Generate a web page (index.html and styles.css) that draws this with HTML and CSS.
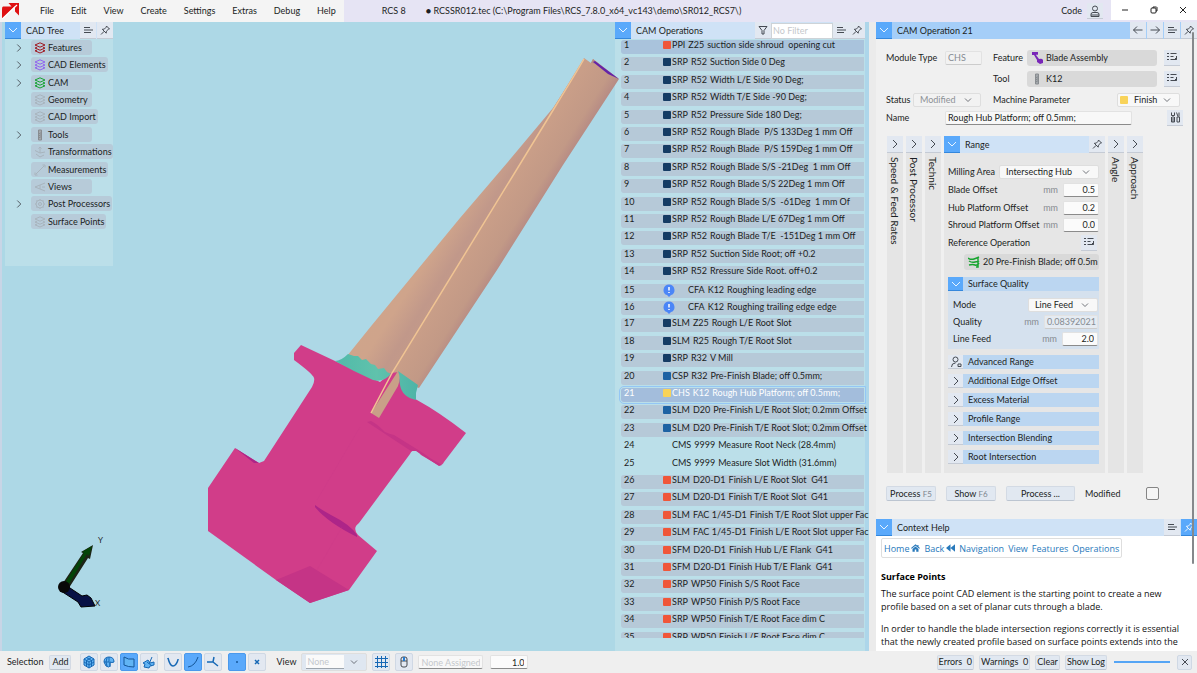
FILE: index.html
```html
<!DOCTYPE html>
<html lang="en">
<head>
<meta charset="utf-8">
<title>RCS 8 - RCSSR012.tec</title>
<link rel="stylesheet" href="styles.css">
</head>
<body>
<svg class="defs" aria-hidden="true">
  <symbol id="down" viewBox="0 0 16 16"><path d="M4 6l4 4 4-4"/></symbol>
  <symbol id="right" viewBox="0 0 16 16"><path d="M6 4l4 4-4 4"/></symbol>
  <symbol id="lines" viewBox="0 0 16 16"><path d="M4 5.500h6M4 8h9M4 10.500h7"/></symbol>
  <symbol id="pin" viewBox="0 0 16 16"><path d="M9.500 4l3 3-1.200.3-1.900 1.900-.2 2-3.900-3.900 2-.2 1.900-1.900zM7.200 9.300L4 12.500"/></symbol>
  <symbol id="arrow-left" viewBox="0 0 16 16"><path d="M12.500 8h-9M7 4.500L3.500 8 7 11.500"/></symbol>
  <symbol id="arrow-right" viewBox="0 0 16 16"><path d="M3.500 8h9M9 4.500L12.500 8 9 11.500"/></symbol>
  <symbol id="funnel" viewBox="0 0 16 16"><path d="M4 4.500h8L9 8.500V12H7V8.500z"/></symbol>
  <symbol id="close" viewBox="0 0 16 16"><path d="M5 5l6 6M11 5l-6 6"/></symbol>
  <symbol id="picklist" viewBox="0 0 16 16"><path d="M3 4.500h2M3 7.500h2M3 10.500h2M6.500 4.500h6M6.500 7.500h3M6.500 10.500h6M12.500 7v3.500M11 9l1.500 1.500"/></symbol>
  <symbol id="layers" viewBox="0 0 12 12"><path d="M6 .8l5 2.200-5 2.200L1 3zM1 6l5 2.200L11 6M1 8.800L6 11l5-2.200M3 5.500L1 6M9 5.500l2 .5M3 8.200l-2 .6M9 8.200l2 .6"/></symbol>
  <symbol id="bit" viewBox="0 0 12 12"><path class="fill" d="M4.500 1h3v10h-3z"/><path d="M4.500 5l3-1.500M4.500 7l3-1.500M4.500 9l3-1.500"/></symbol>
  <symbol id="transform" viewBox="0 0 12 12"><path d="M6 7V1M4.500 2.500L6 1l1.500 1.500M6 7L1 4.500M6 7l5-1M2 8l4 3 4-2"/></symbol>
  <symbol id="measure" viewBox="0 0 12 12"><path d="M2 10l8-8M1 8.500V11h2.500M8.500 1H11v2.500"/></symbol>
  <symbol id="views" viewBox="0 0 12 12"><path d="M11 2L1 6l10 4M6 4v4M8 6h3"/></symbol>
  <symbol id="gear" viewBox="0 0 12 12"><circle cx="6" cy="6" r="4"/><circle cx="6" cy="6" r="1.500"/><path d="M6 1v1M6 10v1M1 6h1M10 6h1M2.500 2.500l.7.7M9.500 9.500l-.7-.7M9.500 2.500l-.7.7M2.500 9.500l.7-.7"/></symbol>
  <symbol id="notice" viewBox="0 0 12 13"><path class="solid" d="M6 .5a5.500 5.500 0 0 1 2 10.600L6 13l-2-1.900A5.500 5.500 0 0 1 6 .5z"/><path class="mark" d="M6 3v3.500M6 8v1"/></symbol>
  <symbol id="person" viewBox="0 0 16 16"><circle cx="8" cy="5.500" r="2.500"/><path d="M4 13.500v-2.200Q4 9.500 6 9.500h4q2 0 2 1.800v2.200zM4 12h8"/></symbol>
</svg>

<header class="titlebar">
  <nav class="menu" aria-label="Main menu">
    <svg class="logo" viewBox="0 0 18 17"><path fill="#df1112" d="M1 3.500h11.500L0 16V6q0-2.500 1-2.500zM6.500 0H17v12.500L13 8.500v-5H9.500z"/><path stroke="#fff" stroke-width="1.200" d="M0 16L15 2"/></svg>
    <button>File</button><button>Edit</button><button>View</button><button>Create</button><button>Settings</button><button>Extras</button><button>Debug</button><button>Help</button>
  </nav>
  <div class="caption"><span>RCS 8</span><span>● RCSSR012.tec (C:\Program Files\RCS_7.8.0_x64_vc143\demo\SR012_RCS7\)</span></div>
  <span class="code">Code</span>
  <button class="tool user" aria-label="User"><svg class="ic"><use href="#person"/></svg></button>
  <div class="window-buttons">
    <button aria-label="Minimize"><svg viewBox="0 0 16 16"><path d="M5 8h6"/></svg></button>
    <button aria-label="Restore"><svg viewBox="0 0 16 16"><rect x="5" y="6" width="5" height="5" rx="1"/><path d="M7 6V5h3.500l.5.500V9h-1"/></svg></button>
    <button aria-label="Close"><svg viewBox="0 0 16 16"><path d="M5 5l6 6M11 5l-6 6"/></svg></button>
  </div>
</header>

<main class="workspace">
  <section class="viewport" aria-label="3D view">
    <svg class="scene" viewBox="0 22 615 629">
      <defs>
        <linearGradient id="skin" gradientUnits="userSpaceOnUse" x1="360" y1="290" x2="445" y2="345"><stop offset="0" stop-color="#b98f83"/><stop offset=".12" stop-color="#cfa58b"/><stop offset=".4" stop-color="#cfa48b"/><stop offset=".62" stop-color="#c1988a"/><stop offset="1" stop-color="#c69c88"/></linearGradient>
        <linearGradient id="face" gradientUnits="userSpaceOnUse" x1="485" y1="225" x2="520" y2="247"><stop offset="0" stop-color="#c99e88"/><stop offset=".6" stop-color="#c29986"/><stop offset="1" stop-color="#b08484"/></linearGradient>
        <linearGradient id="fillet"><stop offset="0" stop-color="#50baa9"/><stop offset=".5" stop-color="#60c2ac"/><stop offset="1" stop-color="#4db4a7"/></linearGradient>
      </defs>
      <path fill="url(#skin)" d="M347 356L372 325 460 218 507 163 553 108 584 60V100L396 380z"/>
      <path fill="url(#face)" d="M584 58l7 5 2-4 26 20-56 86-66 105-78 118-29-10 164-271z"/>
      <path fill="#b58c84" d="M591 63l2-4 6 5z"/><path fill="#6423a8" d="M595 61l24 18-11-5-15-12z"/>
      <path fill="#d13d89" d="M301 345l34 16q34 16 45 21l11-9 8-1 5 20 13 8q22 12 49 33l-22 29q-2 4-6 3l-17-10q-7-9-11-1L359 523q-7 5-1 12l19 16-28 39-39 13-34-23-68-49v-43l27-40 24 15 5-2 48-74q3-6 2-9-1-4-20-18v-7z"/>
      <path fill="#c53486" d="M276 580l34-14 39 24-39 13zM367 422l4-1q5 2 14 11 4 2 9 3l21 13q7 4 15 10l12 7-3 1-23-15-5 0z"/>
      <path fill="#ad2588" d="M315 505q5 4 16 10 20 10 26 20v2q-30-15-42-30zM235 448l24 15-5 0z"/>
      <path fill="none" stroke="#c93787" d="M360 427l-43 73M342 527l-25 43" opacity=".25"/>
      <path fill="url(#fillet)" d="M335 361q6 0 13-7l6 2 4 0 4 4 4-1 5 5 4 1 3 4 6-1 3 4 4 2q-8 9-18 6-20-9-38-19zM398 371l20 14-2 8v7q-14-3-16-15z"/>
      <path fill="#c99f88" d="M371 413l27-42q3 7 0 15l-19 32z"/>
      <path fill="none" stroke="#f0c493" stroke-width="1.500" d="M584 59q-8 14-29 48L392 373l-21 40"/>
      <g class="axes">
        <path fill="#1d2416" d="M61 586l22-33-2-1 12-7-3 14-2-1-21 33z"/><path fill="#034407" d="M63 586l21-33-2-1 10-6-3 10-2-2-20 33z"/>
        <path fill="#071044" stroke="#000" d="M64 584l18 12 5-1 4 3 4 8-14 1-3-5-17-11z"/><circle cx="64" cy="587" r="6" fill="#080808"/>
        <text x="98" y="543">Y</text><text x="95" y="606">X</text>
      </g>
    </svg>
    <aside class="tree panel-glass">
      <div class="head"><button class="tool on" aria-label="Collapse"><svg class="ic"><use href="#down"/></svg></button><h2>CAD Tree</h2><button class="tool" aria-label="Options"><svg class="ic"><use href="#lines"/></svg></button><button class="tool" aria-label="Pin"><svg class="ic"><use href="#pin"/></svg></button></div>
      <ul id="tree"></ul>
    </aside>
  </section>

  <section class="ops panel-glass">
    <div class="head"><button class="tool on" aria-label="Collapse"><svg class="ic"><use href="#down"/></svg></button><h2>CAM Operations</h2><button class="tool" aria-label="Filter"><svg class="ic"><use href="#funnel"/></svg></button><input class="filter" aria-label="Filter text" placeholder="No Filter"><button class="tool" aria-label="Options"><svg class="ic"><use href="#lines"/></svg></button><button class="tool" aria-label="Pin"><svg class="ic"><use href="#pin"/></svg></button></div>
    <ol id="ops"></ol>
  </section>

  <section class="side">
    <div class="head strong"><button class="tool on" aria-label="Collapse"><svg class="ic"><use href="#down"/></svg></button><h2>CAM Operation 21</h2><button class="tool" aria-label="Previous"><svg class="ic"><use href="#arrow-left"/></svg></button><button class="tool" aria-label="Next"><svg class="ic"><use href="#arrow-right"/></svg></button><button class="tool" aria-label="Options"><svg class="ic"><use href="#lines"/></svg></button><button class="tool" aria-label="Pin"><svg class="ic"><use href="#pin"/></svg></button></div>
    <div class="operation">
      <div class="props">
        <div class="row feature"><label for="module">Module Type</label><input id="module" class="field off short" value="CHS" disabled><span class="key">Feature</span><span class="chip grow"><svg viewBox="0 0 12 12" class="mini"><path fill="#7926b8" d="M1 0h6v3L6 2.500 5 3l3 4q3-1 4 1v3l-3 1-3-2V8L3 3H1z"/></svg>Blade Assembly</span><button class="tool" aria-label="Pick feature"><svg class="ic"><use href="#picklist"/></svg></button></div>
        <div class="row feature"><span class="key at-tool">Tool</span><span class="chip grow"><svg class="mini gray"><use href="#bit"/></svg>K12</span><button class="tool" aria-label="Pick tool"><svg class="ic"><use href="#picklist"/></svg></button></div>
        <div class="row status"><label for="status">Status</label><span class="combo state off"><select id="status" disabled><option>Modified</option></select><svg class="ic"><use href="#down"/></svg></span><label for="machine" class="grow">Machine Parameter</label><span class="combo machine"><i class="swatch yellow"></i><select id="machine"><option>Finish</option></select><svg class="ic"><use href="#down"/></svg></span></div>
        <div class="row name"><label for="name">Name</label><input id="name" class="field" value="Rough Hub Platform; off 0.5mm;"><button class="tool" aria-label="Compose name"><svg class="ic"><path d="M4.500 3.500v3h3v-3M6 6.500V13M4.500 8v5h3V8M9.500 3.500l1.500 4M12 3.500v4M10 8h2.500v5H10z"/></svg></button></div>
      </div>

      <div class="tabs">
        <div class="tab"><button class="tool" aria-label="Expand"><svg class="ic"><use href="#right"/></svg></button><span>Speed &amp; Feed Rates</span></div>
        <div class="tab"><button class="tool" aria-label="Expand"><svg class="ic"><use href="#right"/></svg></button><span>Post Processor</span></div>
        <div class="tab"><button class="tool" aria-label="Expand"><svg class="ic"><use href="#right"/></svg></button><span>Technic</span></div>
        <div class="range">
          <div class="head"><button class="tool on" aria-label="Collapse"><svg class="ic"><use href="#down"/></svg></button><h2>Range</h2><button class="tool" aria-label="Pin"><svg class="ic"><use href="#pin"/></svg></button></div>
          <div class="range-body">
            <div class="row"><label for="area">Milling Area</label><span class="combo area"><select id="area"><option>Intersecting Hub</option></select><svg class="ic"><use href="#down"/></svg></span></div>
            <div class="row"><label for="blade">Blade Offset</label><span class="unit">mm</span><input id="blade" class="field num" value="0.5"></div>
            <div class="row"><label for="hub">Hub Platform Offset</label><span class="unit">mm</span><input id="hub" class="field num" value="0.2"></div>
            <div class="row"><label for="shroud">Shroud Platform Offset</label><span class="unit">mm</span><input id="shroud" class="field num" value="0.0"></div>
            <div class="row"><span class="grow">Reference Operation</span><button class="tool" aria-label="Pick operation"><svg class="ic"><use href="#picklist"/></svg></button></div>
            <div class="chip ref"><svg viewBox="0 0 12 12" class="mini"><path fill="none" stroke="#18a530" stroke-width="1.500" d="M0 2q3 2 6 1t5-2M1 5q3 2 6 1t4 0M1 9q4-1 6 0t4-2M10 1v10L8 11"/></svg>20 Pre-Finish Blade; off 0.5m</div>
            <div class="group-head open"><button class="tool on" aria-label="Collapse"><svg class="ic"><use href="#down"/></svg></button><h3>Surface Quality</h3></div>
            <div class="group-body">
              <div class="row"><label for="mode">Mode</label><span class="combo mode"><select id="mode"><option>Line Feed</option></select><svg class="ic"><use href="#down"/></svg></span></div>
              <div class="row"><label for="quality">Quality</label><span class="unit">mm</span><input id="quality" class="field num off wide" value="0.08392021" disabled></div>
              <div class="row"><label for="feed">Line Feed</label><span class="unit">mm</span><input id="feed" class="field num" value="2.0"></div>
            </div>
            <div class="groups">
              <div class="group-head"><button class="tool" aria-label="User level"><svg class="ic"><circle cx="7.500" cy="5.500" r="2.500"/><path d="M3.500 13q0-4 4-4M10 10h3v2.500h-3z"/></svg></button><h3>Advanced Range</h3></div>
              <div class="group-head"><button class="tool" aria-label="Expand"><svg class="ic"><use href="#right"/></svg></button><h3>Additional Edge Offset</h3></div>
              <div class="group-head"><button class="tool" aria-label="Expand"><svg class="ic"><use href="#right"/></svg></button><h3>Excess Material</h3></div>
              <div class="group-head"><button class="tool" aria-label="Expand"><svg class="ic"><use href="#right"/></svg></button><h3>Profile Range</h3></div>
              <div class="group-head"><button class="tool" aria-label="Expand"><svg class="ic"><use href="#right"/></svg></button><h3>Intersection Blending</h3></div>
              <div class="group-head"><button class="tool" aria-label="Expand"><svg class="ic"><use href="#right"/></svg></button><h3>Root Intersection</h3></div>
            </div>
          </div>
        </div>
        <div class="tab"><button class="tool" aria-label="Expand"><svg class="ic"><use href="#right"/></svg></button><span>Angle</span></div>
        <div class="tab"><button class="tool" aria-label="Expand"><svg class="ic"><use href="#right"/></svg></button><span>Approach</span></div>
      </div>

      <div class="actions"><button class="push">Process <small>F5</small></button><button class="push">Show <small>F6</small></button><button class="push long">Process ...</button><label for="modified">Modified</label><input id="modified" type="checkbox"></div>
    </div>

    <div class="head"><button class="tool on" aria-label="Collapse"><svg class="ic"><use href="#down"/></svg></button><h2>Context Help</h2><button class="tool" aria-label="Options"><svg class="ic"><use href="#lines"/></svg></button><button class="tool on" aria-label="Pin"><svg class="ic"><use href="#pin"/></svg></button></div>
    <article class="help">
      <nav class="crumbs" aria-label="Help"><a href="#home">Home <svg viewBox="0 0 12 10"><path d="M6 0l2.500 2V1H10v2.300L12 5l-1 1-5-4-5 4-1-1zM6 3l4 3.200V10H7V7H5v3H2V6.200z"/></svg></a><a href="#back">Back <svg viewBox="0 0 12 10"><path d="M6 0v10L0 5zM12 0v10L6 5z"/></svg></a><a href="#navigation">Navigation</a><a href="#view">View</a><a href="#features">Features</a><a href="#operations">Operations</a></nav>
      <h1>Surface Points</h1>
      <p>The surface point CAD element is the starting point to create a new<br>profile based on a set of planar cuts through a blade.</p>
      <p>In order to handle the blade intersection regions correctly it is essential<br>that the newly created profile based on surface points extends into the</p>
    </article>
    <div class="scroll-thumb"></div>
  </section>
</main>

<footer class="statusbar">
  <span class="key selection">Selection</span><button class="push add">Add</button>
  <div class="tools">
    <button class="tool" aria-label="Solid"><svg class="ic blue"><path class="tint" d="M8 2l5 3v6l-5 3-5-3V5z"/><path d="M3 5l5 3 5-3M8 8v6M5.500 3.500l5 3v6M10.500 3.500l-5 3v6M3 8l5 3 5-3"/></svg></button>
    <button class="tool" aria-label="Sheet"><svg class="ic blue"><path class="tint" d="M3 8q0-5 5-5t5 5q-2 1-4 0v4q-1 2-4 0z"/><path d="M8 3v5H3M9 8v5M6 4q-2 4 0 8"/></svg></button>
    <button class="tool on" aria-label="Face"><svg class="ic navy"><path class="tint" d="M3 3q4 3 10 2v8q-6 0-10-2z"/></svg></button>
    <button class="tool" aria-label="Plane"><svg class="ic blue"><path class="tint" d="M2 9l5-3 2 3 4-1v3l-4 1-1 2-5-1 1-3z"/><path d="M8 10l3-7M6 8l5 4"/></svg></button>
  </div>
  <div class="tools">
    <button class="tool" aria-label="Curve"><svg class="ic blue bold"><path d="M3 4q2 8 5 8t5-6M3 4v1M13 6V5"/></svg></button>
    <button class="tool on" aria-label="Edge"><svg class="ic navy"><path d="M3 13Q10 12 13 3"/></svg></button>
    <button class="tool" aria-label="Axes"><svg class="ic blue bold"><path d="M2 8h6l1-5M8 8l5 4"/></svg></button>
  </div>
  <div class="tools">
    <button class="tool on" aria-label="Point"><svg class="ic navy"><path d="M7 8h2M8 7v2"/></svg></button>
    <button class="tool" aria-label="Cross"><svg class="ic blue bold"><path d="M6 6l4 4M10 6l-4 4"/></svg></button>
  </div>
  <label for="view" class="key">View</label>
  <span class="combo view"><select id="view"><option>None</option></select><svg class="ic"><use href="#down"/></svg></span>
  <button class="tool" aria-label="Grid"><svg class="ic blue"><path d="M4.500 2v12M8.500 2v12M12.500 2v12M2 4.500h13M2 8.500h13M2 12.500h13"/></svg></button>
  <button class="tool mouse" aria-label="Mouse"><svg class="ic"><rect x="5" y="3" width="6" height="10" rx="2"/><path d="M5 7h6"/><path stroke="#257bd0" stroke-width="2" d="M8 3v4"/></svg></button>
  <input class="field assigned" aria-label="Assigned" placeholder="None Assigned"><input class="field num scale" aria-label="Scale" value="1.0">
  <div class="messages"><button class="push">Errors&nbsp; 0</button><button class="push">Warnings&nbsp; 0</button><button class="push">Clear</button><button class="push">Show Log</button><progress aria-label="Progress" value="1"></progress><button class="tool" aria-label="Close"><svg class="ic"><use href="#close"/></svg></button></div>
</footer>
<script src="app.js"></script>
</body>
</html>
```

FILE: styles.css
```css
* { box-sizing: border-box; }
body, h1, h2, h3, p, ul, ol { margin: 0; padding: 0; }
body { height: 100vh; overflow: hidden; display: flex; flex-direction: column; background: #f0f0f0; color: #1b1e23; font: 9px/12px Lato, "Open Sans", sans-serif; }
button, input, select { font: inherit; color: inherit; margin: 0; padding: 0; border: 0; background: none; border-radius: 0; min-width: 0; }
h2, h3 { font: inherit; flex: 1; white-space: nowrap; }
ul, ol { list-style: none; }
.defs { position: absolute; width: 0; height: 0; }
.grow { flex: 1; }
svg { display: block; flex: none; }
.ic { width: 16px; height: 16px; fill: none; stroke: #454a52; stroke-width: 1; overflow: visible; }
.mini { width: 12px; height: 12px; fill: none; stroke-width: 1; }

.titlebar { height: 22px; flex: none; display: flex; align-items: center; background: #e6e4f4; white-space: nowrap; }
.menu { align-self: stretch; display: flex; align-items: center; gap: 17px; min-width: 341px; padding: 0 8px 0 2px; background: #f4f4f4; }
.logo { width: 18px; height: 17px; margin-right: 3px; }
.caption { flex: 1; display: flex; gap: 20px; padding-left: 38px; }
.user { margin: 0 8px 0 5px; }
.window-buttons { align-self: flex-start; display: flex; background: #fff; height: 20px; width: 86px; }
.window-buttons button { flex: 1; display: flex; justify-content: center; align-items: center; }
.window-buttons svg { width: 16px; height: 16px; fill: none; stroke: #222; }

.tool { width: 16px; height: 16px; flex: none; display: flex; align-items: center; justify-content: center; background: #e2e8f1; border-bottom: 1px solid #c5cbd5; }
.tool.on { background: #5aa9fb; border-color: #3487dc; }
.tool.on .ic { stroke: #eaf5ff; }
.head { display: flex; align-items: center; height: 17px; flex: none; background: #cfe2f6; gap: 1px; }
.head .tool { height: 17px; }
.head h2 { padding-left: 4px; }
.head.strong { background: #a5cef8; }

.workspace { flex: 1; min-height: 0; display: flex; }
.viewport { flex: 1; min-width: 0; position: relative; background: #add8e6; border-left: 2px solid #c8d5e6; }
.scene { position: absolute; top: 0; left: -2px; width: calc(100% + 2px); height: 100%; overflow: visible; z-index: 1; }
.axes text { font-size: 8px; fill: #222; }
.panel-glass { background: #bbdfe9; }
.tree { position: relative; z-index: 2; width: 108px; height: 244px; margin-left: 3px; }
.tree li { display: flex; align-items: center; height: 15px; margin-bottom: 2px; padding-left: 8px; }
.tree li:nth-child(5n+2), .tree li:nth-child(5n+5) { margin-bottom: 3px; }
.tree .toggle { width: 12px; height: 14px; margin-right: 6px; display: flex; align-items: center; justify-content: center; }
.tree .toggle .ic { width: 14px; height: 14px; }
.pill { display: flex; align-items: center; gap: 2px; height: 15px; min-width: 61px; padding: 0 2px 0 3px; background: #b7cbd9; border-radius: 3px; white-space: nowrap; }
.tree ul { padding-top: 1px; }
.gray { stroke: #888c90; } .gray .fill, .fill { fill: #a4a8ac; }
.faint { stroke: #a8b4bd; } .red { stroke: #a01820; } .purple { stroke: #8f63f0; } .green { stroke: #15a332; }

.ops { width: 254px; flex: none; display: flex; flex-direction: column; padding-bottom: 13px; border-right: 4px solid #add6ea; }
.filter { width: 62px; height: 16px; background: #fff; border: 1px solid #cdd3d8; padding: 0 1px; }
::placeholder { color: #c5c8cc; opacity: 1; }
.ops .head { gap: 0; }
.ops .head h2 { padding-left: 5px; }
.ops ol { flex: 1; min-height: 0; overflow: hidden; margin-right: -4px; padding: 1px 5px 0 6px; }
.ops li { display: flex; height: 14px; margin-bottom: 3px; padding-left: 3px; border-radius: 3px 0 0 3px; background: #b6c9d8; line-height: 10px; white-space: pre; }
.ops li:nth-child(5n+2), .ops li:nth-child(5n+4) { margin-bottom: 4px; }
.ops li.plain { background: none; }
.ops li.first { background: #a9c3dc; }
.ops li.current { background: #a3bddc; color: #fff; outline: 1px solid #94c6f5; outline-offset: 1px; }
.ops .num { width: 39px; flex: none; text-align: left; }
.ops .text { display: flex; gap: 3px; }
.swatch { width: 8px; height: 8px; flex: none; margin: 1px 1px 0 0; border-radius: 1px; background: #153c64; }
.swatch.blue { background: #1d62a3; } .swatch.orange { background: #f05639; } .swatch.yellow { background: #f8d35a; } .swatch.none { background: none; }
.ops li.notice { line-height: 12px; }
.ops .mini { height: 13px; margin: 0 13px 0 0; }
.solid { fill: #4b86f7; stroke: none; } .mark { stroke: #fff; stroke-width: 1.500; }

.side { width: 328px; flex: none; position: relative; display: flex; flex-direction: column; border-left: 7px solid #ebebeb; background: #f0f0f0; }
.operation { flex: none; padding: 8px 13px 18px 10px; }
.row { display: flex; align-items: center; white-space: nowrap; }
.props .row { height: 21px; }
.props .row.status { height: 19px; margin-top: 1px; }
.props .row.name { height: 17px; }
.row.feature .tool { margin-left: 7px; }
.props .row > label:first-child { width: 59px; flex: none; }
.field { height: 14px; background: #f8f8f8; border: 1px solid #e2e2e2; border-bottom-color: #8b8b8b; border-radius: 2px; padding: 0 2px; }
.field.off { color: #858b92; background: #f2f2f2; border-bottom-color: #ccc; }
.short { width: 37px; }
.key { flex: none; }
.row.feature .key { width: 34px; margin-left: 11px; }
.row.feature .key.at-tool { margin-left: 107px; }
.row.feature { padding-right: 4px; }
.chip { display: flex; align-items: center; gap: 3px; height: 16px; padding-left: 4px; background: #d9d9d9; border-radius: 3px; }
.row.feature .tool, .row.name .tool { flex: none; }
.combo { position: relative; display: flex; align-items: center; height: 14px; background: #f8f8f8; border: 1px solid #dedede; border-radius: 2px; }
.combo select { appearance: none; flex: 1; height: 12px; padding-left: 6px; }
.combo select:disabled { opacity: 1; }
.combo .ic { position: absolute; right: 6px; width: 12px; height: 12px; pointer-events: none; }
.combo.off { color: #8c9196; background: #f2f2f2; }
.state { width: 68px; margin: 0 12px 0 -32px; }
.machine { width: 63px; padding-left: 2px; margin-right: 4px; }
.machine .swatch { margin: 0; }
.row.name .field { width: 187px; }
.row.name .tool { margin-left: 35px; }

.tabs { display: flex; gap: 3px; margin-top: 10px; padding-left: 1px; }
.tab { width: 16px; background: #e5e5e5; }
.tab .tool { height: 17px; }
.tab span { display: block; writing-mode: vertical-rl; width: 16px; margin-top: 4px; font-size: 10px; line-height: 16px; white-space: nowrap; }
.range { width: 161px; background: #e6e6e6; padding-bottom: 9px; }
.range-body { padding: 10px 6px 0 4px; }
.range-body > .row { height: 17px; margin-bottom: 1px; }
.range-body > .row:nth-child(3) { margin-bottom: 0; }
.range-body .row label { flex: 1; }
.unit { color: #868b91; margin-right: 5px; }
.num { text-align: right; }
.field.num { width: 36px; padding-right: 3px; background: #fbfbfb; }
.field.num.off { background: #e5ebf2; padding: 0 1px; }
.field.num.wide { width: 54px; }
.area { width: 100px; }
.mode { width: 70px; }
.range-body .row .tool { margin-right: 2px; }
.ref { margin: 3px 0 7px 16px; white-space: nowrap; }
.group-head { display: flex; align-items: center; height: 14px; background: #bbd6f1; }
.group-head .tool { width: 15px; height: 14px; }
.group-head h3 { padding-left: 5px; }
.group-body { padding: 5px 1px 2px 5px; background: #d5e1ee; }
.group-body .row { height: 17px; }
.groups { display: flex; flex-direction: column; gap: 5px; margin-top: 6px; }

.actions { display: flex; align-items: center; gap: 10px; margin-top: 13px; }
.push { height: 15px; padding: 0 3px; background: #e1e8f1; border: 1px solid #d3dae4; border-bottom-color: #bcc5d1; border-radius: 2px; white-space: nowrap; line-height: 12px; }
.actions .push { width: 50px; }
.actions .push.long { width: 69px; }
.actions small { font-size: 8px; color: #7d858e; }
.actions input { appearance: none; width: 13px; height: 13px; margin: 0 25px 0 auto; border: 1px solid #858585; border-radius: 2px; background: #f5f5f5; }

.help { flex: 1; min-height: 0; overflow: hidden; background: #fff; color: #111; padding: 2px 5px 0; font-family: "Open Sans", sans-serif; line-height: 13px; white-space: nowrap; }
.crumbs { display: flex; align-items: center; gap: 4px; width: max-content; height: 20px; padding: 0 2px; border: 1px solid #dedede; border-radius: 2px; }
.crumbs a { display: flex; align-items: center; gap: 2px; color: #2879bb; text-decoration: none; }
.crumbs svg { width: 9px; height: 8px; fill: #2879bb; }
.help h1 { font-size: 9px; line-height: 13px; margin-top: 12px; color: #000; }
.help p { margin: 4px 0 9px; }
.scroll-thumb { position: absolute; top: 10px; right: 3px; width: 2px; height: 532px; background: #85888b; border-radius: 1px; }

.statusbar { height: 22px; flex: none; display: flex; align-items: center; padding: 0 5px 0 7px; background: #efefef; white-space: nowrap; }
.statusbar .tool { width: 18px; height: 18px; border: 1px solid #cfd8e4; border-radius: 2px; }
.statusbar .tool.on { border-color: #4a99ec; }
.statusbar .ic.blue { stroke: #1668b5; } .statusbar .ic.navy { stroke: #155799; } .bold { stroke-width: 1.500; }
.tint { fill: #61b4f4; }
.selection { min-width: 35px; }
.add { width: 22px; margin: 0 9px 0 6px; padding: 0; }
.tools { display: flex; gap: 2px; margin-right: 6px; }
.statusbar label { min-width: 18px; margin: 0 5px 0 4px; }
.view { width: 66px; height: 18px; margin-right: 5px; background: #dfe7f1; color: #c4c8cd; }
.combo.view select { flex: none; width: 38px; height: 14px; margin-left: 4px; padding-left: 1px; background: #fafafa; border-bottom: 1px solid #9ca4ad; }
.mouse { margin-left: 5px; }
.assigned { width: 65px; margin: 0 7px 0 5px; }
.field.num.scale { width: 38px; }
.messages { display: flex; align-items: center; gap: 5px; margin-left: auto; }
.messages .push { padding: 0 1px; }
progress { appearance: none; width: 56px; height: 2px; margin-left: 2px; border: 0; }
progress::-webkit-progress-bar { background: #ccc; }
progress::-webkit-progress-value { background: #55a5f5; }
.messages .tool { width: 15px; height: 15px; margin-left: 2px; }
```

FILE: app.js
```js
const icon = (name, cls) => `<svg class="${cls}"><use href="#${name}"/></svg>`;

const tree = [
  ["Features", "layers", "red", 1], ["CAD Elements", "layers", "purple", 1], ["CAM", "layers", "green", 1],
  ["Geometry", "layers", "faint"], ["CAD Import", "layers", "faint"], ["Tools", "bit", "gray", 1],
  ["Transformations", "transform", "faint"], ["Measurements", "measure", "faint"], ["Views", "views", "faint"],
  ["Post Processors", "gear", "faint", 1], ["Surface Points", "layers", "faint"]
];
document.getElementById("tree").innerHTML = tree.map(([label, glyph, tone, opens]) =>
  `<li>${opens ? `<button class="toggle" aria-label="Expand ${label}">${icon("right", "ic")}</button>` : '<span class="toggle"></span>'}<span class="pill">${icon(glyph, "mini " + tone)}${label}</span></li>`).join("");

const operations = [
  ["orange", "PPI", "Z25", "suction side shroud  opening cut", "first"],
  ["", "SRP", "R52", "Suction Side 0 Deg"],
  ["", "SRP", "R52", "Width L/E Side 90 Deg;"],
  ["", "SRP", "R52", "Width T/E Side -90 Deg;"],
  ["", "SRP", "R52", "Pressure Side 180 Deg;"],
  ["", "SRP", "R52", "Rough Blade  P/S 133Deg 1 mm Off"],
  ["", "SRP", "R52", "Rough Blade  P/S 159Deg 1 mm Off"],
  ["", "SRP", "R52", "Rough Blade S/S -21Deg  1 mm Off"],
  ["", "SRP", "R52", "Rough Blade S/S 22Deg 1 mm Off"],
  ["", "SRP", "R52", "Rough Blade S/S  -61Deg  1 mm Of"],
  ["", "SRP", "R52", "Rough Blade L/E 67Deg 1 mm Off"],
  ["", "SRP", "R52", "Rough Blade T/E  -151Deg 1 mm Off"],
  ["", "SRP", "R52", "Suction Side Root; off +0.2"],
  ["", "SRP", "R52", "Rressure Side Root. off+0.2"],
  ["", "CFA", "K12", "Roughing leading edge", "notice"],
  ["", "CFA", "K12", "Roughing trailing edge edge", "notice"],
  ["", "SLM", "Z25", "Rough L/E Root Slot"],
  ["", "SLM", "R25", "Rough T/E Root Slot"],
  ["", "SRP", "R32", "V Mill"],
  ["blue", "CSP", "R32", "Pre-Finish Blade; off 0.5mm;"],
  ["yellow", "CHS", "K12", "Rough Hub Platform; off 0.5mm;", "current"],
  ["blue", "SLM", "D20", "Pre-Finish L/E Root Slot; 0.2mm Offset"],
  ["blue", "SLM", "D20", "Pre-Finish T/E Root Slot; 0.2mm Offset"],
  ["none", "CMS", "9999", "Measure Root Neck (28.4mm)", "plain"],
  ["none", "CMS", "9999", "Measure Slot Width (31.6mm)", "plain"],
  ["orange", "SLM", "D20-D1", "Finish L/E Root Slot  G41"],
  ["orange", "SLM", "D20-D1", "Finish T/E Root Slot  G41"],
  ["orange", "SLM", "FAC 1/45-D1", "Finish T/E Root Slot upper Fac"],
  ["orange", "SLM", "FAC 1/45-D1", "Finish L/E Root Slot upper Fac"],
  ["orange", "SFM", "D20-D1", "Finish Hub L/E Flank  G41"],
  ["orange", "SFM", "D20-D1", "Finish Hub T/E Flank  G41"],
  ["orange", "SRP", "WP50", "Finish S/S Root Face"],
  ["orange", "SRP", "WP50", "Finish P/S Root Face"],
  ["orange", "SRP", "WP50", "Finish T/E Root Face dim C"],
  ["orange", "SRP", "WP50", "Finish L/E Root Face dim C"]
];
document.getElementById("ops").innerHTML = operations.map(([color, code, tool, text, kind = ""], i) =>
  `<li class="${kind}"><span class="num">${i + 1}</span>${kind === "notice" ? icon("notice", "mini") : `<i class="swatch ${color}"></i>`}<span class="text"><span>${code}</span><span>${tool}</span><span>${text}</span></span></li>`).join("");
```
